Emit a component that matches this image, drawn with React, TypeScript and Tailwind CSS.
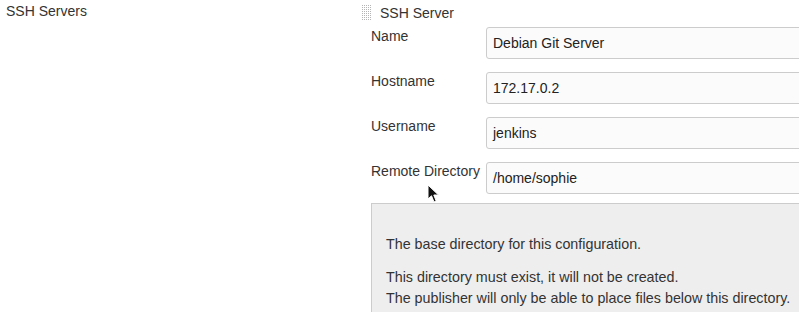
import React from 'react'

const rows = [
  { label: 'Name', value: 'Debian Git Server' },
  { label: 'Hostname', value: '172.17.0.2' },
  { label: 'Username', value: 'jenkins' },
  { label: 'Remote Directory', value: '/home/sophie' },
]

function Handle() {
  return (
    <svg width="10" height="16" viewBox="0 0 10 16" className="shrink-0">
      {Array.from({ length: 8 }).map((_, r) =>
        Array.from({ length: 5 }).map((_, c) => (
          <rect key={r + '-' + c} x={c * 2} y={r * 2} width="1" height="1" fill="#b5b5b5" />
        ))
      )}
    </svg>
  )
}

function Cursor() {
  return (
    <svg width="13" height="20" viewBox="0 0 13 20" className="absolute left-[427px] top-[184px]">
      <path d="M1 1 L1 15 L4.5 11.8 L7 18 L9.2 17 L6.8 11 L11.5 11 Z" fill="#111" stroke="#fff" strokeWidth="1" />
    </svg>
  )
}

export default function App() {
  return (
    <div className="relative w-[799px] h-[312px] overflow-hidden bg-white text-[14px] text-[#333] font-['Liberation_Sans',Arial,sans-serif]">
      <div className="flex">
        <div className="w-[362px] shrink-0 pl-[6px] pt-[2px] leading-[18px]">SSH Servers</div>
        <div className="flex-1 min-w-0">
          <div className="flex items-center gap-[8px] pt-[5px] h-[21px]">
            <Handle />
            <span className="leading-[18px]">SSH Server</span>
          </div>
          <div className="pl-[9px] pt-[6px] w-[600px]">
            <div className="flex flex-col gap-[13px]">
              {rows.map(r => (
                <div key={r.label} className="flex">
                  <div className="w-[115px] shrink-0 leading-[18px]">{r.label}</div>
                  <div className="flex-1 h-[32px] border border-[#ccc] rounded-[3px] bg-[#fbfbfb] px-[6px] flex items-center text-[#222]">
                    {r.value}
                  </div>
                </div>
              ))}
            </div>
            <div className="mt-[9px] border border-[#ccc] bg-[#eeeeee] px-[14px] pt-[30px] pb-[10px] leading-[21px] text-[14.3px]">
              <p>The base directory for this configuration.</p>
              <p className="mt-[12px]">This directory must exist, it will not be created.</p>
              <p>The publisher will only be able to place files below this directory.</p>
            </div>
          </div>
        </div>
      </div>
      <Cursor />
    </div>
  )
}
